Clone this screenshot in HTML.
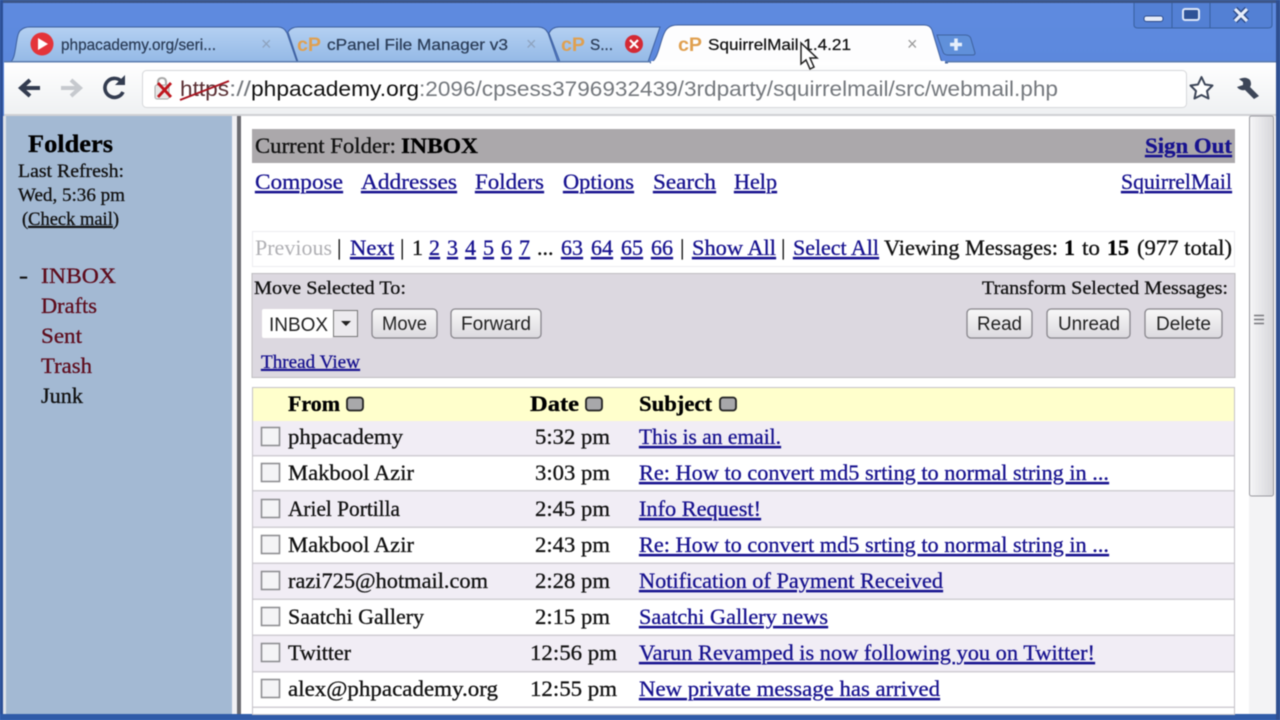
<!DOCTYPE html>
<html><head><meta charset="utf-8"><style>
html,body{margin:0;padding:0;width:1280px;height:720px;overflow:hidden;background:#4a76c4}
svg{display:block;filter:blur(.5px)}
text{white-space:pre}
.s{font-family:"Liberation Serif",serif;font-size:22px;fill:#111;stroke:#111;stroke-width:.3px}
.b{font-weight:bold;fill:#000;stroke:#000}
.l{fill:#17128f;stroke:#17128f;text-decoration:underline}
.a{font-family:"Liberation Sans",sans-serif}
.t{font-family:"Liberation Sans",sans-serif;font-size:16px;fill:#2b3d58;stroke:#2b3d58;stroke-width:.25px}
.u{font-family:"Liberation Sans",sans-serif;font-size:21px;fill:#74787d}
.r{fill:#5e0c1c;stroke:#5e0c1c}
.btn{font-family:"Liberation Sans",sans-serif;font-size:19px;fill:#222}
</style></head><body>
<svg width="1280" height="720" viewBox="0 0 1280 720" xmlns="http://www.w3.org/2000/svg">
<defs>
<linearGradient id="fr" x1="0" y1="0" x2="0" y2="1"><stop offset="0" stop-color="#5f8be0"/><stop offset="1" stop-color="#3f6dc0"/></linearGradient>
<linearGradient id="tb" x1="0" y1="0" x2="0" y2="1"><stop offset="0" stop-color="#ffffff"/><stop offset="1" stop-color="#eef0f2"/></linearGradient>
<linearGradient id="tab" x1="0" y1="0" x2="0" y2="1"><stop offset="0" stop-color="#b4d0f2"/><stop offset="1" stop-color="#94b9e6"/></linearGradient>
<linearGradient id="bt" x1="0" y1="0" x2="0" y2="1"><stop offset="0" stop-color="#f8f8f8"/><stop offset="1" stop-color="#dcdadf"/></linearGradient>
<linearGradient id="sc" x1="0" y1="0" x2="1" y2="0"><stop offset="0" stop-color="#f6f6f8"/><stop offset="1" stop-color="#d6d6da"/></linearGradient>
</defs>
<!-- frame -->
<rect width="1280" height="720" fill="url(#fr)"/>
<rect width="1280" height="3" fill="#3c5688"/>
<rect x="0" y="0" width="3" height="720" fill="#2c4f96"/>
<rect x="0" y="714" width="1280" height="6" fill="#2f5ba8"/>
<rect x="1276" y="0" width="4" height="720" fill="#2f4f90"/>
<!-- window controls -->
<path d="M1134 3V25q0 3 4 3H1268q4 0 4-3V3" fill="#5380d4" stroke="#38609f" stroke-width="1"/>
<path d="M1172 3V28M1210 3V28" stroke="#38609f" stroke-width="1"/>
<rect x="1144" y="16" width="19" height="5.500" rx="2.500" fill="#e4ebf8" stroke="#2b4a88"/>
<rect x="1183" y="9" width="16" height="11" rx="2" fill="#2f5296" stroke="#dde6f8" stroke-width="2"/>
<path d="M1235 9l12 12M1247 9l-12 12" stroke="#2b4a88" stroke-width="6"/>
<path d="M1235 9l12 12M1247 9l-12 12" stroke="#e6edfa" stroke-width="3.200"/>
<!-- inactive tabs -->
<path d="M10 62C17 60 15 33 21 30Q24 27 30 27H278Q284 27 287 33L297 62Z" fill="url(#tab)" stroke="#3d5f9e"/>
<path d="M288 32Q291 27 298 27H538Q545 27 548 33L558 62H298Z" fill="url(#tab)" stroke="#3d5f9e"/>
<path d="M549 33Q552 27 559 27H660L648 62H560Z" fill="url(#tab)" stroke="#3d5f9e"/>
<!-- new tab btn -->
<path d="M937 35H965Q970 35 971 39L975 53Q975 55 973 55H948Q944 55 943 52Z" fill="#6090da" stroke="#3f629f"/>
<path d="M950 44.500H962M956 38.500V50.500" stroke="#e6effb" stroke-width="3.500"/>
<!-- toolbar -->
<rect x="4" y="62" width="1272" height="54" fill="url(#tb)"/>
<rect x="4" y="61" width="660" height="1.500" fill="#5b7cae"/>
<rect x="940" y="61" width="336" height="1.500" fill="#5b7cae"/>
<rect x="4" y="114" width="1272" height="2" fill="#cfd0d4"/>
<!-- active tab -->
<path d="M650 63C660 60 660 34 668 28Q671 25 678 25H924Q930 25 932 30L941 60Q943 63 948 63Z" fill="#fdfdfe" stroke="#3f5f9c"/>
<rect x="651" y="61" width="294" height="4" fill="#ffffff"/>
<!-- tab favicons -->
<circle cx="42" cy="44" r="11.500" fill="#e4343a"/>
<path d="M38 38L48 44L38 50Z" fill="#fff"/>
<text x="61" y="50" class="t" textLength="155" lengthAdjust="spacingAndGlyphs">phpacademy.org/seri...</text>
<text x="261" y="50" class="a" font-size="18" fill="#8ea3bf">×</text>
<g class="a" font-size="19" font-weight="bold" fill="#e0a050"><text x="297" y="51" textLength="24" lengthAdjust="spacingAndGlyphs">cP</text><text x="561" y="51" textLength="24" lengthAdjust="spacingAndGlyphs">cP</text><text x="678" y="51" textLength="24" lengthAdjust="spacingAndGlyphs">cP</text></g>
<text x="327" y="50" class="t" textLength="181" lengthAdjust="spacingAndGlyphs">cPanel File Manager v3</text>
<text x="526" y="50" class="a" font-size="18" fill="#8ea3bf">×</text>
<text x="590" y="50" class="t" textLength="23" lengthAdjust="spacingAndGlyphs">S...</text>
<circle cx="634" cy="44" r="9" fill="#d42a34"/>
<path d="M630 40l8 8M638 40l-8 8" stroke="#fff" stroke-width="2.200"/>
<text x="708" y="50" class="t" style="fill:#111;stroke:#111" textLength="143" lengthAdjust="spacingAndGlyphs">SquirrelMail 1.4.21</text>
<text x="907" y="50" class="a" font-size="18" fill="#9a9a9a">×</text>
<!-- nav icons -->
<path d="M40 88H24M30 80L21 88L30 96" fill="none" stroke="#333c50" stroke-width="4"/>
<path d="M61 88H77M71 80L80 88L71 96" fill="none" stroke="#c6c9ce" stroke-width="4"/>
<path d="M121 81A9.500 9.500 0 1 0 123 92" fill="none" stroke="#333c50" stroke-width="3.600"/>
<path d="M115 85H125V75Z" fill="#333c50"/>
<!-- omnibox -->
<rect x="142.500" y="70.500" width="1044" height="37" rx="4" fill="#fff" stroke="#d6d7da"/>
<path d="M158 86V82Q158 78 162 78Q166 78 166 82V86" fill="none" stroke="#a8a8a8" stroke-width="2"/>
<rect x="155" y="85" width="14" height="14" rx="2" fill="#e6e6e6" stroke="#a8a8a8"/>
<path d="M158 83L171 97M171 83L158 97" stroke="#c0161e" stroke-width="2.800"/>
<text x="180" y="96" class="u" textLength="49" lengthAdjust="spacingAndGlyphs" style="fill:#5a3034">https</text>
<path d="M180 100L229 81" stroke="#a81420" stroke-width="2"/>
<text x="229" y="96" class="u" textLength="22" lengthAdjust="spacingAndGlyphs">://</text>
<text x="251" y="96" class="u" style="fill:#111" textLength="168" lengthAdjust="spacingAndGlyphs">phpacademy.org</text>
<text x="419" y="96" class="u" textLength="639" lengthAdjust="spacingAndGlyphs">:2096/cpsess3796932439/3rdparty/squirrelmail/src/webmail.php</text>
<path d="M1201.500 77L1205 84.500L1212.500 85.500L1207 91L1208.500 98.500L1201.500 95L1194.500 98.500L1196 91L1190.500 85.500L1198 84.500Z" fill="#fff" stroke="#3d4658" stroke-width="2" stroke-linejoin="round"/>
<path d="M1239 79Q1246 76 1250 80Q1252 84 1250 87L1259 96L1254 99L1245 90Q1240 91 1237 87L1243 85L1243 82Z" fill="#3d4658"/>
<!-- content -->
<rect x="6" y="116" width="1270" height="598" fill="#fff"/>
<rect x="3" y="116" width="3" height="598" fill="#dfe3ea"/>
<rect x="6" y="116" width="226" height="598" fill="#a3b9d3"/>
<rect x="232" y="116" width="5" height="598" fill="#f0f0f4"/>
<rect x="237" y="116" width="4" height="598" fill="#6a6a70"/>
<!-- sidebar -->
<text x="28" y="152" class="s b" style="font-size:25px" textLength="85" lengthAdjust="spacingAndGlyphs">Folders</text>
<text x="18" y="177" class="s" style="font-size:19px" textLength="106" lengthAdjust="spacingAndGlyphs">Last Refresh:</text>
<text x="18" y="201" class="s" style="font-size:19px" textLength="107" lengthAdjust="spacingAndGlyphs">Wed, 5:36 pm</text>
<text x="22" y="225" class="s" style="font-size:19px" textLength="97" lengthAdjust="spacingAndGlyphs">(<tspan text-decoration="underline">Check mail</tspan>)</text>
<text x="19" y="283" class="s" textLength="9" lengthAdjust="spacingAndGlyphs">-</text>
<text x="41" y="283" class="s r" textLength="75" lengthAdjust="spacingAndGlyphs">INBOX</text>
<text x="41" y="313" class="s r" textLength="56" lengthAdjust="spacingAndGlyphs">Drafts</text>
<text x="41" y="343" class="s r" textLength="41" lengthAdjust="spacingAndGlyphs">Sent</text>
<text x="41" y="373" class="s r" textLength="51" lengthAdjust="spacingAndGlyphs">Trash</text>
<text x="41" y="403" class="s" textLength="42" lengthAdjust="spacingAndGlyphs">Junk</text>
<!-- header bar -->
<rect x="252" y="129" width="983" height="34" fill="#aba8ab"/>
<text x="255" y="153" class="s" textLength="141" lengthAdjust="spacingAndGlyphs">Current Folder:</text>
<text x="401" y="153" class="s b" textLength="77" lengthAdjust="spacingAndGlyphs">INBOX</text>
<text x="1145" y="153" class="s b l" textLength="87" lengthAdjust="spacingAndGlyphs">Sign Out</text>
<!-- nav links -->
<text x="255" y="189" class="s l" textLength="88" lengthAdjust="spacingAndGlyphs">Compose</text>
<text x="361" y="189" class="s l" textLength="96" lengthAdjust="spacingAndGlyphs">Addresses</text>
<text x="475" y="189" class="s l" textLength="69" lengthAdjust="spacingAndGlyphs">Folders</text>
<text x="563" y="189" class="s l" textLength="71" lengthAdjust="spacingAndGlyphs">Options</text>
<text x="653" y="189" class="s l" textLength="63" lengthAdjust="spacingAndGlyphs">Search</text>
<text x="734" y="189" class="s l" textLength="43" lengthAdjust="spacingAndGlyphs">Help</text>
<text x="1121" y="189" class="s l" textLength="111" lengthAdjust="spacingAndGlyphs">SquirrelMail</text>
<!-- pagination -->
<rect x="252.500" y="231.500" width="982" height="35" fill="#fff" stroke="#ececf0"/>
<text x="255" y="255" class="s" style="fill:#b0b0b4;stroke:none" textLength="77" lengthAdjust="spacingAndGlyphs">Previous</text>
<text x="337" y="255" class="s">|</text>
<text x="350" y="255" class="s l" textLength="44" lengthAdjust="spacingAndGlyphs">Next</text>
<text x="400" y="255" class="s">|</text>
<text x="412" y="255" class="s">1</text>
<text x="429" y="255" class="s l">2</text><text x="447" y="255" class="s l">3</text><text x="465" y="255" class="s l">4</text><text x="483" y="255" class="s l">5</text><text x="501" y="255" class="s l">6</text><text x="519" y="255" class="s l">7</text>
<text x="537" y="255" class="s">...</text>
<text x="561" y="255" class="s l">63</text><text x="591" y="255" class="s l">64</text><text x="621" y="255" class="s l">65</text><text x="651" y="255" class="s l">66</text>
<text x="680" y="255" class="s">|</text>
<text x="692" y="255" class="s l" textLength="84" lengthAdjust="spacingAndGlyphs">Show All</text>
<text x="781" y="255" class="s">|</text>
<text x="793" y="255" class="s l" textLength="86" lengthAdjust="spacingAndGlyphs">Select All</text>
<text x="884" y="255" class="s" textLength="174" lengthAdjust="spacingAndGlyphs">Viewing Messages:</text>
<text x="1064" y="255" class="s b">1</text>
<text x="1082" y="255" class="s" textLength="18" lengthAdjust="spacingAndGlyphs">to</text>
<text x="1107" y="255" class="s b">15</text>
<text x="1137" y="255" class="s" textLength="95" lengthAdjust="spacingAndGlyphs">(977 total)</text>
<!-- action panel -->
<rect x="252" y="273.500" width="983" height="104" fill="#dcd8e0" stroke="#bdbcc0"/>
<text x="254" y="294" class="s" style="font-size:19px" textLength="152" lengthAdjust="spacingAndGlyphs">Move Selected To:</text>
<text x="982" y="294" class="s" style="font-size:19px" textLength="246" lengthAdjust="spacingAndGlyphs">Transform Selected Messages:</text>
<rect x="262" y="309" width="71" height="29" rx="2" fill="#fff"/>
<text x="269" y="331" class="btn" textLength="59" lengthAdjust="spacingAndGlyphs">INBOX</text>
<rect x="333.500" y="310.500" width="24" height="26" fill="#eceaee" stroke="#777"/>
<path d="M341 321H351L346 326Z" fill="#222"/>
<g fill="url(#bt)" stroke="#88868c" stroke-width="1.300">
<rect x="372" y="309" width="65" height="29" rx="4"/>
<rect x="451" y="309" width="90" height="29" rx="4"/>
<rect x="967" y="309" width="65" height="29" rx="4"/>
<rect x="1047" y="309" width="83" height="29" rx="4"/>
<rect x="1145" y="309" width="77" height="29" rx="4"/>
</g>
<text x="382" y="330" class="btn" textLength="45" lengthAdjust="spacingAndGlyphs">Move</text>
<text x="461" y="330" class="btn" textLength="70" lengthAdjust="spacingAndGlyphs">Forward</text>
<text x="977" y="330" class="btn" textLength="45" lengthAdjust="spacingAndGlyphs">Read</text>
<text x="1058" y="330" class="btn" textLength="62" lengthAdjust="spacingAndGlyphs">Unread</text>
<text x="1156" y="330" class="btn" textLength="55" lengthAdjust="spacingAndGlyphs">Delete</text>
<text x="261" y="368" class="s l" style="font-size:19px" textLength="99" lengthAdjust="spacingAndGlyphs">Thread View</text>
<!-- table -->
<rect x="252.500" y="387.500" width="982" height="327" fill="#fff" stroke="#c4c2c8"/>
<rect x="253" y="388" width="981" height="33" fill="#ffffcc"/>
<rect x="253" y="421" width="981" height="34" fill="#f1edf5"/>
<rect x="253" y="491" width="981" height="36" fill="#f1edf5"/>
<rect x="253" y="563" width="981" height="36" fill="#f1edf5"/>
<rect x="253" y="635" width="981" height="36" fill="#f1edf5"/>
<g fill="#d0ced4"><rect x="253" y="455" width="981" height="1.500"/><rect x="253" y="490" width="981" height="1.500"/><rect x="253" y="526.500" width="981" height="1.500"/><rect x="253" y="562.500" width="981" height="1.500"/><rect x="253" y="598.500" width="981" height="1.500"/><rect x="253" y="634.500" width="981" height="1.500"/><rect x="253" y="671" width="981" height="1.500"/><rect x="253" y="706.500" width="981" height="1.500"/></g>
<text x="288" y="411" class="s b" textLength="52" lengthAdjust="spacingAndGlyphs">From</text>
<text x="530" y="411" class="s b" textLength="49" lengthAdjust="spacingAndGlyphs">Date</text>
<text x="639" y="411" class="s b" textLength="73" lengthAdjust="spacingAndGlyphs">Subject</text>
<g fill="#a8a8aa" stroke="#222" stroke-width="1.800"><rect x="347" y="397.500" width="16" height="13" rx="3"/><rect x="586" y="397.500" width="16" height="13" rx="3"/><rect x="720" y="397.500" width="16" height="13" rx="3"/></g>
<g fill="#f4f4f6" stroke="#8a8a8e" stroke-width="1.500"><rect x="261.500" y="427.500" width="18" height="18"/><rect x="261.500" y="463.500" width="18" height="18"/><rect x="261.500" y="499.500" width="18" height="18"/><rect x="261.500" y="535.500" width="18" height="18"/><rect x="261.500" y="571.500" width="18" height="18"/><rect x="261.500" y="607.500" width="18" height="18"/><rect x="261.500" y="643.500" width="18" height="18"/><rect x="261.500" y="679.500" width="18" height="18"/></g>
<text x="288" y="444" class="s" textLength="115" lengthAdjust="spacingAndGlyphs">phpacademy</text>
<text x="535" y="444" class="s" textLength="75" lengthAdjust="spacingAndGlyphs">5:32 pm</text>
<text x="639" y="444" class="s l" textLength="142" lengthAdjust="spacingAndGlyphs">This is an email.</text>
<text x="288" y="480" class="s" textLength="126" lengthAdjust="spacingAndGlyphs">Makbool Azir</text>
<text x="535" y="480" class="s" textLength="75" lengthAdjust="spacingAndGlyphs">3:03 pm</text>
<text x="639" y="480" class="s l" textLength="470" lengthAdjust="spacingAndGlyphs">Re: How to convert md5 srting to normal string in ...</text>
<text x="288" y="516" class="s" textLength="112" lengthAdjust="spacingAndGlyphs">Ariel Portilla</text>
<text x="535" y="516" class="s" textLength="75" lengthAdjust="spacingAndGlyphs">2:45 pm</text>
<text x="639" y="516" class="s l" textLength="122" lengthAdjust="spacingAndGlyphs">Info Request!</text>
<text x="288" y="552" class="s" textLength="126" lengthAdjust="spacingAndGlyphs">Makbool Azir</text>
<text x="535" y="552" class="s" textLength="75" lengthAdjust="spacingAndGlyphs">2:43 pm</text>
<text x="639" y="552" class="s l" textLength="470" lengthAdjust="spacingAndGlyphs">Re: How to convert md5 srting to normal string in ...</text>
<text x="288" y="588" class="s" textLength="200" lengthAdjust="spacingAndGlyphs">razi725@hotmail.com</text>
<text x="535" y="588" class="s" textLength="75" lengthAdjust="spacingAndGlyphs">2:28 pm</text>
<text x="639" y="588" class="s l" textLength="304" lengthAdjust="spacingAndGlyphs">Notification of Payment Received</text>
<text x="288" y="624" class="s" textLength="136" lengthAdjust="spacingAndGlyphs">Saatchi Gallery</text>
<text x="535" y="624" class="s" textLength="75" lengthAdjust="spacingAndGlyphs">2:15 pm</text>
<text x="639" y="624" class="s l" textLength="189" lengthAdjust="spacingAndGlyphs">Saatchi Gallery news</text>
<text x="288" y="660" class="s" textLength="63" lengthAdjust="spacingAndGlyphs">Twitter</text>
<text x="530" y="660" class="s" textLength="87" lengthAdjust="spacingAndGlyphs">12:56 pm</text>
<text x="639" y="660" class="s l" textLength="456" lengthAdjust="spacingAndGlyphs">Varun Revamped is now following you on Twitter!</text>
<text x="288" y="696" class="s" textLength="210" lengthAdjust="spacingAndGlyphs">alex@phpacademy.org</text>
<text x="530" y="696" class="s" textLength="87" lengthAdjust="spacingAndGlyphs">12:55 pm</text>
<text x="639" y="696" class="s l" textLength="301" lengthAdjust="spacingAndGlyphs">New private message has arrived</text>
<!-- scrollbar -->
<rect x="1249" y="116" width="27" height="598" fill="#f3f3f5"/>
<rect x="1249.500" y="116" width="24" height="380" rx="2" fill="url(#sc)" stroke="#9a9aa0"/>
<path d="M1254 315.500H1264M1254 319.500H1264M1254 323.500H1264" stroke="#77777c" stroke-width="1.500"/>
<!-- cursor -->
<path d="M801 43V64L806 60L810 69L814 67L810 58L817 58Z" fill="#fff" stroke="#222" stroke-width="1.500"/>
</svg>
</body></html>
